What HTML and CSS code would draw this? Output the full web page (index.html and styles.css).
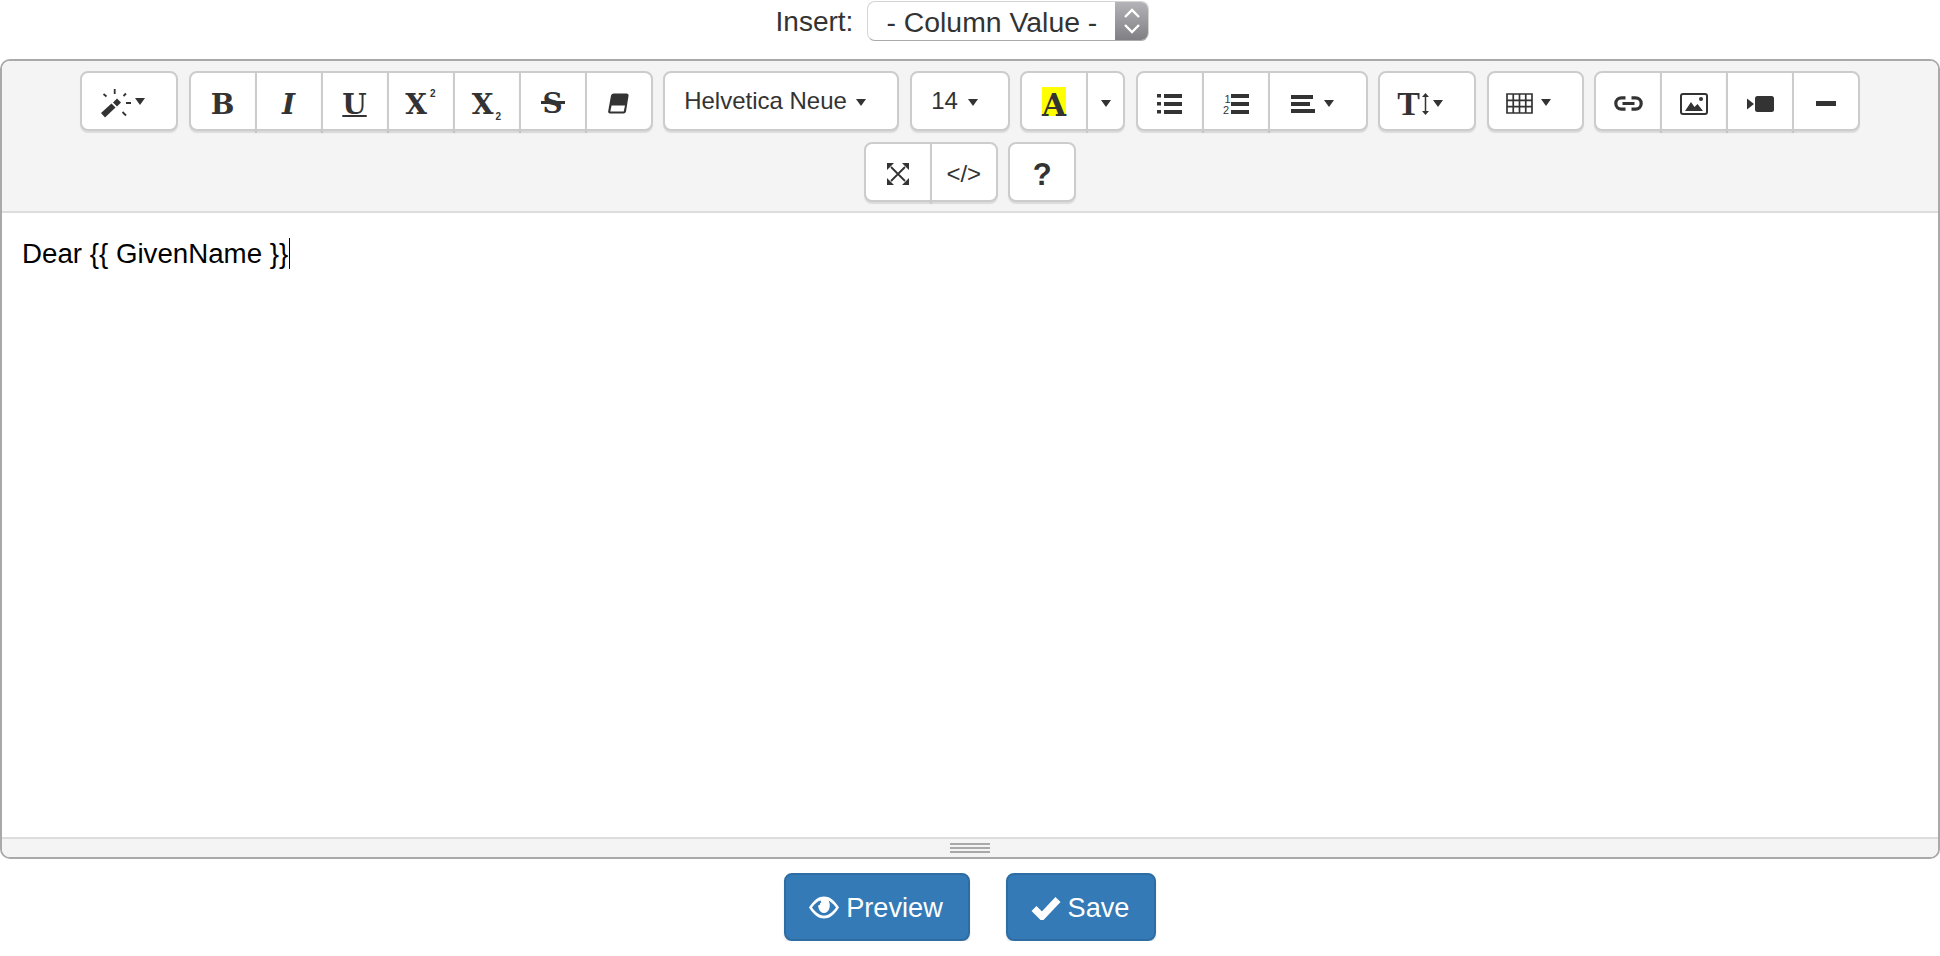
FILE: index.html
```html
<!DOCTYPE html>
<html lang="en">
<head>
    <meta charset="UTF-8">
    <title>Mail template</title>
    <link rel="stylesheet" href="styles.css">
</head>
<body>

<div class="insert-row">
    <span class="insert-label">Insert:</span>
    <div class="select-box">
        <span class="select-text">- Column Value -</span>
        <span class="stepper">
            <svg width="18" height="26" viewBox="0 0 18 26"><path d="M2 9 9 2l7 7M2 17l7 7 7-7" fill="none" stroke="#fff" stroke-width="2.4"/></svg>
        </span>
    </div>
</div>

<div class="editor">
    <div class="toolbar">
        <div class="group">
            <button class="btn btn-wand ico">
                <svg class="wand" width="32" height="30" viewBox="0 0 32 30">
                    <path d="M1 24 11.500 14.500 15.500 18.500 5 28.500z" fill="#333"/>
                    <path d="M13 13.500 17 9.500l4 4-4 4z" fill="#333"/>
                    <path d="M3.500 5 6.500 7.500M14.700 0v5M23.500 7 26 4.500M26 14h5M22.500 23l3.500 3.500" stroke="#333" stroke-width="1.800" fill="none"/>
                </svg>
                <i class="caret caret-wand"></i>
            </button>
        </div>
        <div class="group">
            <button class="btn btn-sq ico glyph">B</button>
            <button class="btn btn-sq ico glyph glyph-italic">I</button>
            <button class="btn btn-sq ico glyph glyph-under">U</button>
            <button class="btn btn-sq ico glyph">X<span class="small-up">2</span></button>
            <button class="btn btn-sq ico glyph">X<span class="small-down">2</span></button>
            <button class="btn btn-sq ico glyph glyph-strike">S</button>
            <button class="btn btn-sq ico">
                <svg width="21" height="21" viewBox="0 0 21 21">
                    <path d="M6 .5h12.500a2 2 0 0 1 2 2.500L18 18.500a2.500 2.500 0 0 1-2.500 2H2a1.800 1.800 0 0 1-1.800-2.300L3 2.500A3 3 0 0 1 6 .5z" fill="#333"/>
                    <path d="M3.600 12.500h13.400L15.700 18.500H2.300z" fill="#fff"/>
                </svg>
            </button>
        </div>
        <div class="group">
            <button class="btn btn-font">Helvetica Neue<i class="caret caret-text"></i></button>
        </div>
        <div class="group">
            <button class="btn btn-size">14<i class="caret caret-size"></i></button>
        </div>
        <div class="group">
            <button class="btn btn-sq ico"><span class="color-a">A</span></button>
            <button class="btn btn-split ico"><i class="caret"></i></button>
        </div>
        <div class="group">
            <button class="btn btn-sq ico">
                <svg width="25" height="20" viewBox="0 0 25 20">
                    <path d="M0 0h4v3.500H0zM0 8h4v3.500H0zM0 16h4v3.500H0zM7 0h18v4H7zM7 8h18v4H7zM7 16h18v4H7z" fill="#333"/>
                </svg>
            </button>
            <button class="btn btn-sq ico">
                <svg width="26" height="26" viewBox="0 0 26 26">
                    <text class="ol-num" x="1.500" y="11.500">1</text>
                    <text class="ol-num" x="0" y="22.500">2</text>
                    <path d="M8 3h18v4H8zM8 11h18v4H8zM8 19h18v4H8z" fill="#333"/>
                </svg>
            </button>
            <button class="btn btn-align ico">
                <svg width="24" height="20" viewBox="0 0 24 20">
                    <path d="M0 1h22v4H0zM0 8h19v4H0zM0 15h24v4H0z" fill="#333"/>
                </svg>
                <i class="caret caret-align"></i>
            </button>
        </div>
        <div class="group">
            <button class="btn btn-para ico">
                <span class="para-t">T</span>
                <svg class="para-arrow" width="9" height="22" viewBox="0 0 9 22">
                    <path d="M4.500 2v18" stroke="#333" stroke-width="1.500"/>
                    <path d="M4.500 0 8 4H1zM4.500 22 8 18H1z" fill="#333"/>
                </svg>
                <i class="caret"></i>
            </button>
        </div>
        <div class="group">
            <button class="btn btn-table ico">
                <svg width="27" height="21" viewBox="0 0 27 21">
                    <path d="M1 1h25v19H1zM7.250 1v19M13.500 1v19M19.750 1v19M1 7.300h25M1 13.700h25" fill="none" stroke="#333" stroke-width="1.700"/>
                </svg>
                <i class="caret caret-table"></i>
            </button>
        </div>
        <div class="group">
            <button class="btn btn-sq ico">
                <svg width="29" height="15" viewBox="0 0 29 15">
                    <path d="M11.500 1.800H7.500a5.700 5.700 0 0 0 0 11.400h4M17.500 1.800h4a5.700 5.700 0 0 1 0 11.400h-4" fill="none" stroke="#333" stroke-width="3.200"/>
                    <path d="M8.500 6h12v3h-12z" fill="#333"/>
                </svg>
            </button>
            <button class="btn btn-sq ico">
                <svg width="28" height="22" viewBox="0 0 28 22">
                    <rect x="1" y="1" width="26" height="20" rx="2" fill="none" stroke="#333" stroke-width="2"/>
                    <path d="M5 18 11 9l3.500 5 3-3 5.500 7z" fill="#333"/>
                    <circle cx="21" cy="6" r="2" fill="#333"/>
                </svg>
            </button>
            <button class="btn btn-sq ico">
                <svg width="27" height="16" viewBox="0 0 27 16">
                    <path d="M0 2.500 7 8 0 13.500z" fill="#333"/>
                    <rect x="8" y="0" width="19" height="16" rx="2.500" fill="#333"/>
                </svg>
            </button>
            <button class="btn btn-sq ico"><i class="minus"></i></button>
        </div>
        <div class="group">
            <button class="btn btn-sq ico">
                <svg width="22" height="22" viewBox="0 0 22 22">
                    <path d="M4 4 18 18M18 4 4 18" stroke="#333" stroke-width="1.800"/>
                    <path d="M0 0h7L0 7zM22 0v7L15 0zM0 22v-7l7 7zM22 22h-7l7-7z" fill="#333"/>
                </svg>
            </button>
            <button class="btn btn-sq ico code-text">&lt;/&gt;</button>
        </div>
        <div class="group">
            <button class="btn btn-sq ico help-text">?</button>
        </div>
    </div>

    <div class="editor-body">Dear {{ GivenName }}<span class="text-caret"></span></div>

    <div class="statusbar">
        <div class="grip"><i></i><i></i><i></i></div>
    </div>
</div>

<div class="actions">
    <button class="btn-primary btn-preview">
        <svg width="30" height="23" viewBox="0 0 30 23">
            <path d="M0 11.500C5 3.500 10 .5 15 .5s10 3 15 11c-5 8-10 11-15 11s-10-3-15-11z" fill="#fff"/>
            <path d="M3 11.500C6 7.500 8.500 5.500 10.500 4.500 7.500 10 10 17 15 17s7.500-7 4.500-12.500c2 1 4.500 3 7.500 7-4 5.500-8 8-12 8s-8-2.500-12-8z" fill="#337ab7"/>
            <path d="M12 5.500a3 3 0 0 0-2 3.500" fill="none" stroke="#337ab7" stroke-width="2"/>
        </svg>
        Preview
    </button>
    <button class="btn-primary btn-save">
        <svg width="30" height="24" viewBox="0 0 30 24">
            <path d="M3 12.500 11 20.500 27 3.500" fill="none" stroke="#fff" stroke-width="7"/>
        </svg>
        Save
    </button>
</div>

</body>
</html>
```

FILE: styles.css
```css
html, body { margin: 0; padding: 0; background-color: #fff; }
body { font-family: "Liberation Sans", Arial, sans-serif; color: #333; overflow: hidden; }
button { font-family: inherit; color: inherit; margin: 0; }

/* insert row */
.insert-row { display: flex; justify-content: center; align-items: flex-start; height: 59px; padding-top: 1px; padding-right: 15px; box-sizing: border-box; }
.insert-label { font-size: 28px; line-height: 42px; margin-right: 14px; }
.select-box { display: flex; width: 282px; height: 40px; box-sizing: border-box; border: 1px solid #d4d4d4; border-bottom-color: #aaa; border-radius: 8px; overflow: hidden; background-color: #fff; }
.select-text { flex: 1; font-size: 28.4px; line-height: 34px; padding: 3px 0 0 18px; }
.stepper { width: 33px; display: flex; align-items: center; justify-content: center; background: linear-gradient(#b4b4b8, #808084); }

/* editor box */
.editor { border: 2px solid #a9a9a9; border-radius: 10px; height: 800px; box-sizing: border-box; display: flex; flex-direction: column; overflow: hidden; }
.toolbar { display: flex; flex-wrap: wrap; justify-content: center; gap: 10.5px; padding: 10px 70px 10px; height: 152px; box-sizing: border-box; background-color: #f4f4f4; border-bottom: 2px solid #ddd; align-content: flex-start; }
.group { display: flex; height: 60px; }

.btn { position: relative; display: flex; align-items: center; justify-content: center; height: 60px; padding: 0; box-sizing: border-box; background-color: #fff; border: 2px solid #ccc; border-radius: 0; box-shadow: 0 2px 1px rgba(0, 0, 0, 0.1); font-size: 24px; }
.btn + .btn { margin-left: -2px; }
.group .btn:first-child { border-top-left-radius: 8px; border-bottom-left-radius: 8px; }
.group .btn:last-child { border-top-right-radius: 8px; border-bottom-right-radius: 8px; }
.ico { padding-top: 5px; }

.btn-sq { width: 68px; }
.btn-wand { width: 98px; padding-right: 14px; }
.btn-font { width: 236px; padding-right: 12px; }
.btn-size { width: 100px; padding-right: 10px; }
.btn-split { width: 39px; }
.btn-align { width: 100px; padding-right: 10px; }
.btn-para { width: 98px; padding-right: 14px; }
.btn-table { width: 97px; padding-right: 13px; }

.caret { display: inline-block; width: 0; height: 0; border-top: 7px solid #333; border-left: 5.5px solid transparent; border-right: 5.5px solid transparent; }
.caret-wand { margin-left: 3px; margin-top: -4px; }
.caret-text { margin-left: 9px; margin-top: 2px; }
.caret-size { margin-left: 10px; margin-top: 2px; }
.caret-align { margin-left: 9px; }
.caret-table { margin-left: 8px; margin-top: -3px; }

/* serif glyph buttons */
.glyph { font-family: "DejaVu Serif", serif; font-weight: bold; font-size: 28px; line-height: 1; padding-top: 8px; }
.glyph-italic { font-style: italic; }
.glyph-under { text-decoration: underline; text-decoration-thickness: 2px; text-underline-offset: 1px; }
.glyph-strike { padding-top: 6px; }
.glyph-strike::after { content: ""; position: absolute; left: calc(50% - 12px); top: 28px; width: 24px; height: 3px; background-color: #333; }
.small-up, .small-down { font-family: "Liberation Sans", sans-serif; font-size: 10px; line-height: 1; align-self: center; margin-left: 2px; }
.small-up { margin-bottom: 22px; margin-left: 3px; }
.small-down { margin-top: 24px; }

.color-a { display: block; width: 24px; height: 29px; background-color: #ff0; text-align: center; font-family: "DejaVu Serif", serif; font-weight: bold; font-size: 31px; line-height: 36px; margin-top: -5px; }
.ol-num { font-family: "Liberation Sans", sans-serif; font-size: 11px; fill: #333; }
.para-t { font-family: "Liberation Serif", serif; font-weight: bold; font-size: 34px; line-height: 1; }
.para-arrow { margin: 0 3px 0 1px; }
.minus { display: block; width: 20px; height: 4.5px; background-color: #333; }
.code-text { font-size: 24px; }
.help-text { font-size: 31px; font-weight: bold; padding-top: 6px; }

/* text area */
.editor-body { flex: 1; background-color: #fff; padding: 21px 20px 17px; font-size: 27.7px; line-height: 39px; color: #000; }
.text-caret { display: inline-block; width: 1px; height: 31px; background-color: #000; vertical-align: -6px; margin-left: 1px; }

.statusbar { height: 20px; box-sizing: border-box; background-color: #f4f4f4; border-top: 2px solid #ddd; display: flex; justify-content: center; padding-top: 4px; }
.grip { width: 40px; }
.grip i { display: block; height: 2px; margin-bottom: 2px; background-color: #a9a9a9; }

/* bottom buttons */
.actions { display: flex; justify-content: center; gap: 36px; margin-top: 14px; }
.btn-primary { display: flex; align-items: center; justify-content: center; gap: 7px; height: 68px; box-sizing: border-box; padding: 1px 2px 0 0; color: #fff; font-size: 27.16px; background-color: #337ab7; border: 2px solid #2e6da4; border-radius: 8px; box-shadow: 0 2px 2px rgba(0, 0, 0, 0.12); }
.btn-preview { width: 186px; }
.btn-save { width: 150px; }
```
